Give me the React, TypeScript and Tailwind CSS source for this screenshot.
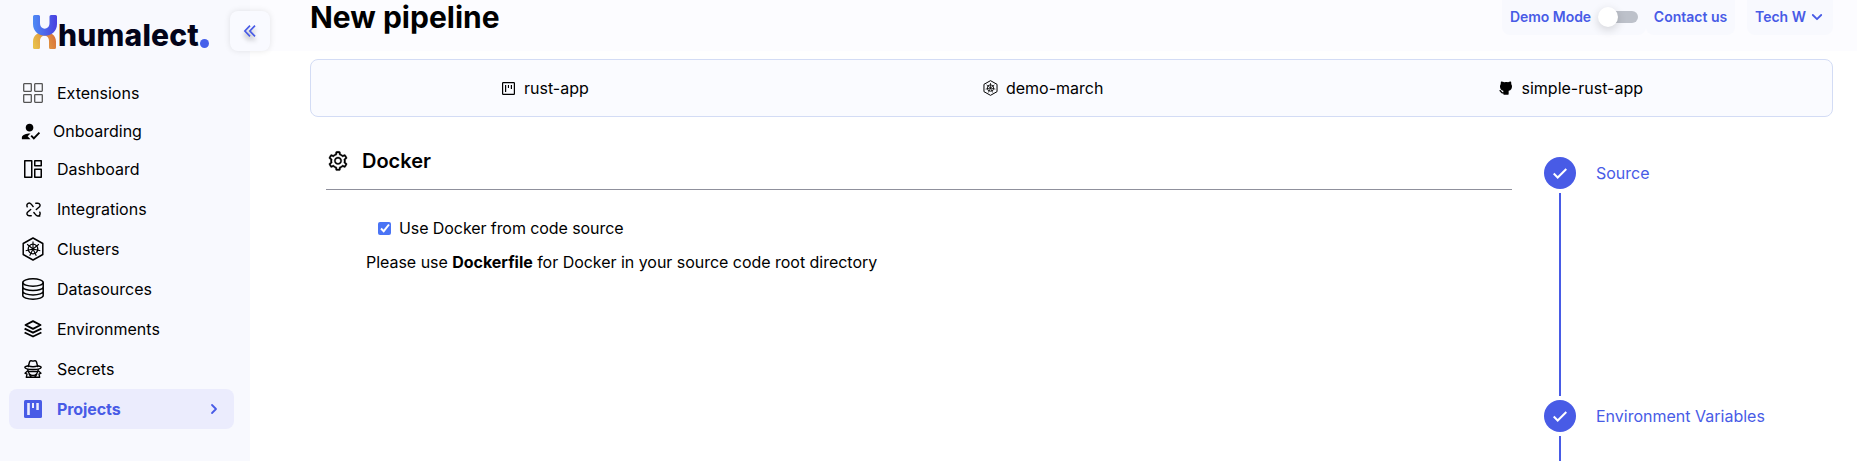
import React from "react";
import { MdHowToReg } from "react-icons/md";
import { AiOutlineSetting } from "react-icons/ai";
import { TbBrandGithubFilled } from "react-icons/tb";

type IconProps = { className?: string };

const Extensions = ({ className }: IconProps) => (
  <svg viewBox="0 0 20 20" className={className} fill="none" stroke="currentColor" strokeWidth="1.300">
    <rect x="0.700" y="0.700" width="7.600" height="7.600" rx="0.500" />
    <rect x="11.700" y="0.700" width="7.600" height="7.600" rx="0.500" />
    <rect x="0.700" y="11.700" width="7.600" height="7.600" rx="0.500" />
    <rect x="11.700" y="11.700" width="7.600" height="7.600" rx="0.500" />
  </svg>
);

const Dashboard = ({ className }: IconProps) => (
  <svg viewBox="0 0 18 18" className={className} fill="none" stroke="currentColor" strokeWidth="1.5" strokeLinejoin="round">
    <rect x="0.75" y="0.75" width="7" height="16.5" />
    <rect x="10.75" y="0.75" width="6.5" height="5" />
    <rect x="10.75" y="9.25" width="6.5" height="8" />
  </svg>
);

const Integrations = ({ className }: IconProps) => (
  <svg viewBox="0 0 16 16" className={className} fill="none" stroke="currentColor" strokeWidth="1.500" strokeLinecap="round" strokeLinejoin="round">
    <path d="M1.300 5.200C.3 3 1.700 1 3.600 1c1.500 0 2.300 1.600 4 3.800" />
    <path d="M10.400 1.300h2.300C14.800 1.300 15.600 3.600 14.400 5L11 8" />
    <path d="M14.700 10.800c1 2.200-.4 4.200-2.300 4.200-1.500 0-2.300-1.600-4-3.800M12.400 15h2.300" />
    <path d="M5.600 14.700H3.300C1.200 14.700.4 12.400 1.600 11L5 8" />
  </svg>
);

const Kube = ({ className }: IconProps) => (
  <svg viewBox="0 0 22 24" className={className} fill="none" stroke="currentColor" strokeWidth="1.500" strokeLinejoin="round">
    <path d="M11 1 20.800 6.500v11L11 23 1.200 17.500v-11z" />
    <circle cx="11" cy="12" r="4.800" strokeWidth="1.300" />
    <path strokeWidth="1.100" d="M11 12V4.500M11 12l5.900-4.700M11 12l7.300 1.700M11 12l3.300 6.800M11 12l-3.300 6.800M11 12l-7.300 1.700M11 12 5.100 7.300" />
  </svg>
);

const Database = ({ className }: IconProps) => (
  <svg viewBox="0 0 22 22" className={className} fill="none" stroke="currentColor" strokeWidth="1.500">
    <ellipse cx="11" cy="4.500" rx="10.200" ry="3.700" />
    <path d="M.8 4.500v13c0 2 4.500 3.700 10.200 3.700s10.200-1.700 10.200-3.700v-13M.8 9c0 2 4.500 3.600 10.200 3.600S21.200 11 21.200 9M.8 13.300c0 2 4.500 3.600 10.200 3.600s10.200-1.600 10.200-3.600" />
  </svg>
);

const Layers = ({ className }: IconProps) => (
  <svg viewBox="0 0 18 18" className={className} fill="none" stroke="currentColor" strokeWidth="1.900" strokeLinejoin="round">
    <path d="M9 1.200 16.500 5 9 8.800 1.500 5z" />
    <path d="M.6 8.700 9 12.700l8.400-4M.6 12.500 9 16.500l8.400-4" />
  </svg>
);

const Spy = ({ className }: IconProps) => (
  <svg viewBox="0 0 18 18" className={className} fill="none" stroke="currentColor" strokeWidth="1.400" strokeLinejoin="round" strokeLinecap="round">
    <path d="M4.300 6.500 5.500 2C6 .4 7.500.6 9 1.200c1.500-.6 3-.8 3.500.8l1.200 4.500" />
    <path d="M4.300 5.800C1.500 6.400.7 7 .9 7.600 1.300 8.800 5 9.500 9 9.500s7.700-.7 8.100-1.900c.2-.6-.6-1.200-3.400-1.800C10.500 7 7.500 7 4.300 5.800z" />
    <path d="M3.800 9.500C4.200 13.500 6.500 15.500 9 15.500s4.800-2 5.200-6M5 11.500h8" />
    <path d="M3.500 11 1 13.200l2 1-.7 3.100h13.400l-.7-3.100 2-1L14.500 11M5.300 14.500l2 2.500M12.700 14.500l-2 2.500" />
  </svg>
);

const Board = ({ className }: IconProps) => (
  <svg viewBox="0 0 18 18" className={className}>
    <rect width="18" height="18" rx="1.500" fill="currentColor" />
    <path fill="#ebecfd" d="M3.200 3h2.600v12H3.200zM8 3h2v5H8zM12.300 3h2.500v7h-2.500z" />
  </svg>
);

const BoardOutline = ({ className }: IconProps) => (
  <svg viewBox="0 0 13 13" className={className}>
    <rect x="0.600" y="0.600" width="11.800" height="11.800" rx="0.600" fill="none" stroke="currentColor" strokeWidth="1.200" />
    <path fill="currentColor" d="M3 3h1.200v7H3zM5.900 3h1.100v3H5.900zM8.800 3H10v4H8.800z" />
  </svg>
);

const Chevron = ({ className }: IconProps) => (
  <svg viewBox="0 0 12 12" className={className} fill="none" stroke="currentColor" strokeWidth="1.800" strokeLinecap="round" strokeLinejoin="round">
    <path d="M4 2l4 4-4 4" />
  </svg>
);

const LogoMark = () => (
  <svg viewBox="0 0 24 34" className="h-[34px] w-6 shrink-0" fill="none">
    <defs>
      <linearGradient id="blue" x1="0" y1="0" x2="1" y2="0">
        <stop stopColor="#4e8bf5" />
        <stop offset="1" stopColor="#4a40e0" />
      </linearGradient>
      <linearGradient id="orange" x1="0" y1="0.600" x2="1" y2="0.300">
        <stop stopColor="#e8c04a" />
        <stop offset="1" stopColor="#d9703a" />
      </linearGradient>
    </defs>
    <path d="M0 32.500V26.500C0 13.500 23 13.500 23 26.500v6q0 1.500-1.500 1.500h-4q-1.500 0-1.500-1.500V26c0-7-9-7-9 0v6.500Q7 34 5.500 34h-4Q0 34 0 32.500z" fill="url(#orange)" />
    <path d="M0 1.500Q0 0 1.500 0H5.500Q7 0 7 1.500V8c0 7.500 9.500 7.500 9.500 0V1.500Q16.500 0 18 0h4.500Q24 0 24 1.500V9c0 15.500-24 15.500-24 0z" fill="url(#blue)" />
  </svg>
);

const items = [
  { label: "Extensions", icon: <Extensions className="size-5 text-[#555]" /> },
  { label: "Onboarding", icon: <MdHowToReg className="size-[23px] shrink-0" />, compact: true },
  { label: "Dashboard", icon: <Dashboard className="size-[18px]" /> },
  { label: "Integrations", icon: <Integrations className="size-[15px]" /> },
  { label: "Clusters", icon: <Kube className="h-6 w-[22px]" /> },
  { label: "Datasources", icon: <Database className="size-[22px]" /> },
  { label: "Environments", icon: <Layers className="size-[18px]" /> },
  { label: "Secrets", icon: <Spy className="size-[18px]" /> },
];

const Step = ({ label }: { label: string }) => (
  <div className="flex h-8 items-center">
    <span className="flex size-8 items-center justify-center rounded-full bg-[#485be6]">
      <svg viewBox="0 0 14 11" className="h-[11px] w-3.5" fill="none" stroke="#fff" strokeWidth="2">
        <path d="M.7 5.500 4.700 9.500 13.300 1" />
      </svg>
    </span>
    <span className="ml-5 text-[#485be6]">{label}</span>
  </div>
);

export default function App() {
  return (
    <div className="flex h-[461px] w-full overflow-hidden bg-white font-['Inter',sans-serif] text-base leading-6 text-black">
      <aside className="relative w-[250px] shrink-0 bg-[#f8f9fe]">
        <div className="flex h-[73px] items-start pt-[15px] pl-[33px]">
          <LogoMark />
          <span className="mt-[3px] ml-px w-[140px] text-[30px] leading-[34px] font-extrabold tracking-[0.200px] text-[#03041a]">humalect</span>
          <span className="mt-6 ml-[2px] size-[9px] rounded-full bg-[#4560ea]" />
        </div>
        <nav className="pl-[9px]">
          {items.map(({ label, icon, compact }) => (
            <div key={label} className={compact ? "flex h-9 items-center pl-[10px]" : "flex h-10 items-center pl-[13px]"}>
              <span className="flex w-[22px] justify-center">{icon}</span>
              <span className={compact ? "ml-3" : "ml-[13px]"}>{label}</span>
            </div>
          ))}
          <div className="flex h-10 w-[225px] items-center rounded-lg bg-[#ebecfd] pl-[13px] font-bold text-[#485be6]">
            <span className="flex w-[22px] justify-center"><Board className="size-[18px]" /></span>
            <span className="ml-[13px] tracking-[-0.080px]">Projects</span>
            <Chevron className="mr-3.5 ml-auto size-3" />
          </div>
        </nav>
        <button className="absolute top-[11px] left-[230px] flex size-10 items-center justify-center rounded-lg bg-[#f9faff] text-[#485be6] shadow-[0_0_6px_rgba(0,0,0,0.1)]">
          <svg viewBox="0 0 12 12" className="size-3 overflow-visible drop-shadow-[0_4px_2px_rgba(0,0,0,0.3)]" fill="none" stroke="currentColor" strokeWidth="1.700">
            <path d="M6 .7.9 6 6 11.300M11 .7 5.900 6 11 11.300" />
          </svg>
        </button>
      </aside>
      <main className="flex min-w-0 flex-1 flex-col">
        <header className="flex h-[51px] shrink-0 items-start justify-between bg-[#fcfcff] pr-6 pl-[60px]">
          <h1 className="text-[30px] leading-[34px] font-bold">New pipeline</h1>
          <div className="flex h-[35px] text-sm font-semibold text-[#485be6]">
            <div className="flex w-36 items-center rounded-b-lg bg-[#f8f9fe] pr-2 pb-px pl-2 tracking-[-0.050px]">
              Demo Mode
              <span className="relative ml-auto h-3 w-[34px] shrink-0 rounded-full bg-[#bdc1ca]">
                <span className="absolute -top-1 -left-[6px] size-5 rounded-full bg-white shadow-[0_3px_10px_rgba(0,0,0,0.16)]" />
              </span>
            </div>
            <div className="mr-3 flex w-[89px] items-center justify-center rounded-b-lg bg-[#f8f9fe] pb-px">Contact us</div>
            <div className="flex w-[86px] items-center rounded-b-lg bg-[#f8f9fe] pb-px pl-2">
              Tech W
              <svg viewBox="0 0 12 12" className="ml-[5px] size-3 shrink-0" fill="none" stroke="currentColor" strokeWidth="1.800" strokeLinecap="round" strokeLinejoin="round">
                <path d="M1.800 4 6 8.200 10.200 4" />
              </svg>
            </div>
          </div>
        </header>
        <section className="mt-2 mr-6 ml-[60px] flex h-[58px] shrink-0 items-center justify-between rounded-lg border border-[#d3dcf5] bg-[#fafbff] pr-[189px] pl-[191px]">
          <div className="flex items-center gap-[9px]"><BoardOutline className="size-[13px]" />rust-app</div>
          <div className="flex items-center gap-2"><Kube className="h-4 w-[15px]" />demo-march</div>
          <div className="flex items-center gap-2"><TbBrandGithubFilled className="size-4" />simple-rust-app</div>
        </section>
        <div className="flex flex-1 pl-[76px]">
          <section className="w-[1186px] pt-[26px]">
            <div className="flex h-[47px] items-start border-b border-[#8f909c] pl-px">
              <AiOutlineSetting className="mt-[7px] size-[22px]" stroke="currentColor" strokeWidth="16" />
              <h2 className="ml-[13px] text-xl leading-9 font-semibold">Docker</h2>
            </div>
            <label className="mt-[26px] ml-[52px] flex items-center">
              <span className="flex size-[13px] items-center justify-center rounded-[2px] bg-[#4a74f5]">
                <svg viewBox="0 0 10 10" className="size-2.5" fill="none" stroke="#fff" strokeWidth="2">
                  <path d="M1 5.500 3.700 8.200 9 1.500" />
                </svg>
              </span>
              <span className="ml-2 tracking-[-0.080px]">Use Docker from code source</span>
            </label>
            <p className="mt-2.5 ml-10 tracking-[-0.030px]">Please use <b>Dockerfile</b> for Docker in your source code root directory</p>
          </section>
          <aside className="ml-8 flex flex-col pt-10">
            <Step label="Source" />
            <span className="mt-1 mb-1 ml-[15px] h-[203px] w-0.5 shrink-0 bg-[#485be6]" />
            <Step label="Environment Variables" />
            <span className="mt-1 ml-[15px] w-0.5 flex-1 bg-[#485be6]" />
          </aside>
        </div>
      </main>
    </div>
  );
}
